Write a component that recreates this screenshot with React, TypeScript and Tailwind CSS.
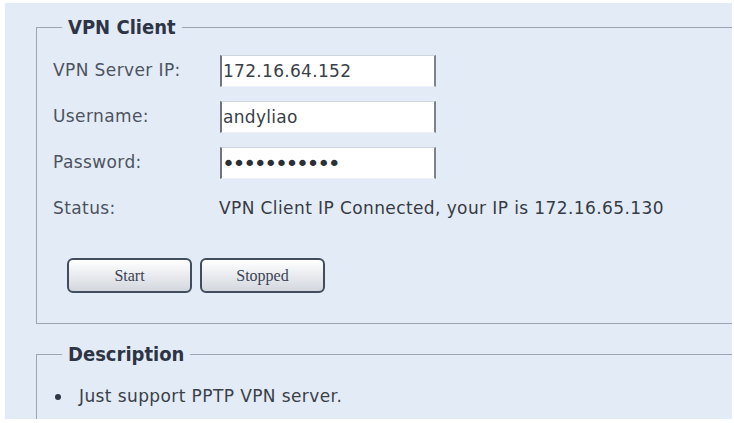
const font = { fontFamily: '"DejaVu Sans", Tahoma, sans-serif' };
const legendFont = { fontFamily: '"DejaVu Sans Condensed", "DejaVu Sans", Tahoma, sans-serif' };

const fields = [
  ["VPN Server IP:", "172.16.64.152", "text"],
  ["Username:", "andyliao", "text"],
  ["Password:", "xxxxxxxxxxx", "password"],
];

export default function App() {
  return (
    <div className="h-[423px] w-[734px] overflow-hidden bg-white pl-[5px] pt-[3px]" style={font}>
      <div className="flex h-[416px] w-[727px] flex-col overflow-hidden bg-[#e3ebf6] pl-[31px] pt-[14px]">
        <fieldset className="border border-r-0 border-[#9ca5b1] pb-[30px] pl-[16px] pt-[11px]">
          <legend className="ml-[9px] px-[6px] text-[20px] font-bold leading-[20px] text-[#2d3445]" style={legendFont}>
            VPN Client
          </legend>
          {fields.map(([label, value, type]) => (
            <div key={label} className="flex h-[46px] items-center">
              <span className="w-[167px] text-[17px] tracking-[0.4px] text-[#4d535e]">{label}</span>
              <input
                readOnly
                type={type}
                value={value}
                className={
                  type === "password"
                    ? "h-[32px] w-[216px] border-y border-x-2 border-t-[#cfd5dd] border-b-[#eef1f5] border-l-[#6e7580] border-r-[#7d848f] bg-white px-0 text-[22px] tracking-[-2.4px] text-[#2a2f38] outline-none"
                    : "h-[32px] w-[216px] border-y border-x-2 border-t-[#cfd5dd] border-b-[#eef1f5] border-l-[#6e7580] border-r-[#7d848f] bg-white px-[1px] text-[17px] tracking-[0.3px] text-[#3a3f48] outline-none"
                }
                style={font}
              />
            </div>
          ))}
          <div className="flex h-[46px] items-center">
            <span className="w-[166px] text-[17px] tracking-[0.4px] text-[#4d535e]">Status:</span>
            <span className="text-[17px] tracking-[0.4px] text-[#363b44]">VPN Client IP Connected, your IP is 172.16.65.130</span>
          </div>
          <div className="ml-[14px] mt-[26px] flex gap-[8px]">
            {["Start", "Stopped"].map((b) => (
              <button
                key={b}
                className="h-[35px] w-[125px] rounded-[6px] border-2 border-[#414c5c] bg-gradient-to-b from-white to-[#d3d7de] text-[16px] text-[#3b4357]"
                style={{ fontFamily: '"Liberation Serif", "Times New Roman", serif' }}
              >
                {b}
              </button>
            ))}
          </div>
        </fieldset>
        <fieldset className="mt-[20px] flex-1 border border-b-0 border-r-0 border-[#9ca5b1] pl-[16px] pt-[23px]">
          <legend className="ml-[9px] px-[6px] text-[20px] font-bold leading-[20px] text-[#2d3445]" style={legendFont}>
            Description
          </legend>
          <div className="flex h-[20px] items-center text-[17px] tracking-[0.4px] text-[#3a3f48]">
            <span className="ml-[2px] mr-[18px] h-[6px] w-[6px] rounded-full bg-[#2f3644]" />
            Just support PPTP VPN server.
          </div>
        </fieldset>
      </div>
    </div>
  );
}
